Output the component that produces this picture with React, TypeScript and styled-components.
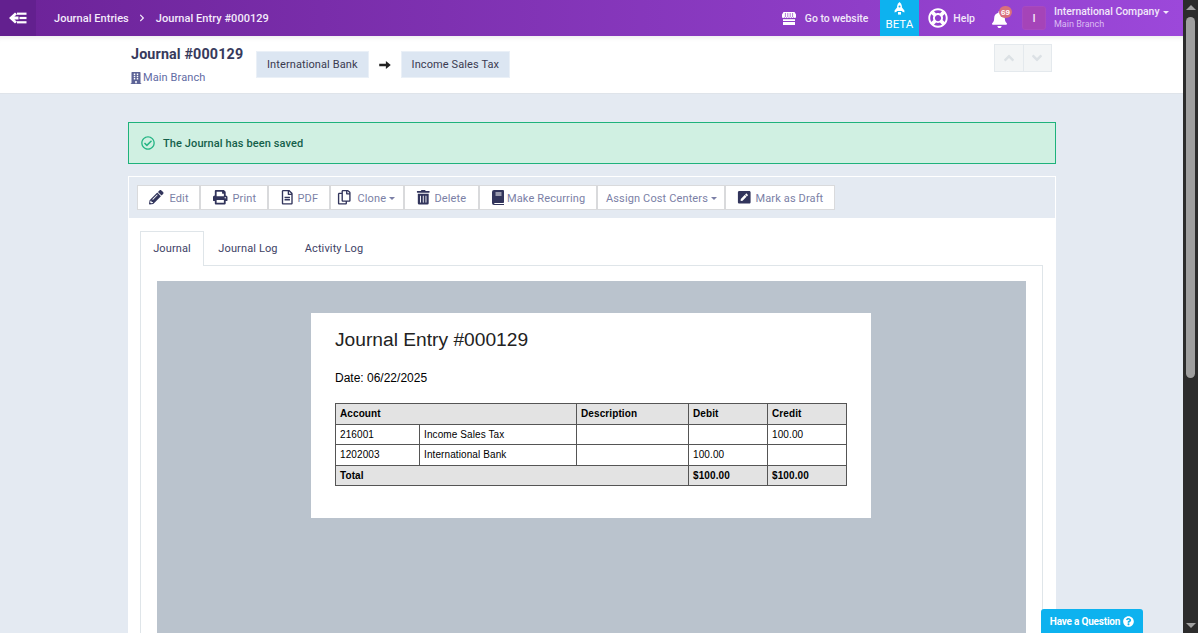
import React from "react";
import styled, { createGlobalStyle } from "styled-components";
import {
  FaPencilAlt, FaPrint, FaRegFileAlt, FaRegCopy, FaTrashAlt, FaPenSquare,
  FaRegLifeRing, FaBell, FaBuilding, FaRegCheckCircle,
  FaQuestionCircle, FaAngleUp, FaAngleDown, FaChevronRight,
} from "react-icons/fa";

const Global = createGlobalStyle`
  html, body { margin: 0; padding: 0; height: 633px; overflow: hidden; }
  body { font-family: Roboto, "Liberation Sans", sans-serif; }
  * { box-sizing: border-box; }
`;

const Shell = styled.div`display: flex; width: 1198px; height: 633px; overflow: hidden; background: #e4eaf2;`;
const Main = styled.div`width: 1183px; height: 633px; display: flex; flex-direction: column; overflow: hidden;`;

const ScrollTrack = styled.div`width: 15px; height: 633px; background: #2c2c2c; display: flex; flex-direction: column; align-items: center; flex: none;`;
const ScrollArrowUp = styled.div`width: 0; height: 0; margin-top: 5px; border-left: 5px solid transparent; border-right: 5px solid transparent; border-bottom: 5px solid #a0a0a0;`;
const ScrollThumb = styled.div`width: 9px; height: 361px; margin-top: 7px; background: #9f9f9f; border-radius: 5px;`;
const ScrollSpace = styled.div`flex: 1;`;
const ScrollArrowDown = styled.div`width: 0; height: 0; margin-bottom: 5px; border-left: 5px solid transparent; border-right: 5px solid transparent; border-top: 5px solid #a0a0a0;`;

const Topbar = styled.header`
  height: 36px; flex: none; display: flex; align-items: center; color: #fff;
  background: linear-gradient(90deg, #6c2398 0%, #9c48da 100%);
`;
const BackButton = styled.div`width: 36px; height: 36px; display: flex; align-items: center; justify-content: center; background: #63208f;`;
const Crumbs = styled.div`margin-left: 18px; display: flex; align-items: center; font-size: 11px; font-weight: 500; color: #f4ebfb; letter-spacing: .04px;`;
const CrumbSep = styled.span`display: flex; margin: 0 9.5px; font-size: 8px;`;
const TopRight = styled.div`margin-left: auto; display: flex; align-items: center; height: 36px;`;
const WebLink = styled.div`display: flex; align-items: center; font-size: 10.4px; font-weight: 500; color: #f2e8fa; margin-right: 12px;`;
const WebIcon = styled.span`display: flex; margin-right: 9px;`;
const Beta = styled.div`
  width: 39px; height: 36px; background: #0db2ef; display: flex; flex-direction: column; align-items: center;
  font-size: 11.5px; color: #fff; padding: 2px 1px 0 0; line-height: 13px;
  svg { margin-bottom: 3px; }
`;
const HelpLink = styled.div`display: flex; align-items: center; margin-left: 9px; font-size: 10.5px; font-weight: 500; color: #f2e8fa; svg { font-size: 20px; margin-right: 5px; color: #fff; }`;
const Bell = styled.div`position: relative; margin-left: 16px; width: 18px; height: 18px; display: flex; svg { font-size: 17px; margin-top: 2px; color: #fff; }`;
const BellBadge = styled.span`
  position: absolute; left: 8px; top: -3px; width: 13px; height: 12px; border-radius: 6px;
  background: #d9707c; color: #fff; font-size: 8px; font-weight: 700; display: flex; align-items: center; justify-content: center;
  font-family: "Liberation Sans", sans-serif;
`;
const Avatar = styled.div`
  width: 24px; height: 24px; margin-left: 13px; background: #a544b8; border-radius: 3px; color: #f4e6f7; border: 1px solid #a84ac0;
  display: flex; align-items: center; justify-content: center; font-size: 11px; font-weight: 500;
`;
const Company = styled.div`margin-left: 8px; width: 129px; display: flex; flex-direction: column; line-height: 12px;`;
const CompanyName = styled.div`font-size: 10.4px; font-weight: 500; color: #f2e8fa; display: flex; align-items: center;`;
const Caret = styled.span`
  display: inline-block; width: 0; height: 0; margin-left: ${(p: { $gap?: number }) => p.$gap ?? 4}px; border-left: 3px solid transparent;
  border-right: 3px solid transparent; border-top: 3px solid currentColor;
`;
const CompanySub = styled.div`font-size: 9px; color: #dcbcf3;`;

const SubHeader = styled.div`
  height: 58px; flex: none; background: #fff; border-bottom: 1px solid #dfe4ea; display: flex; padding-left: 131px;
  box-shadow: inset 0 6px 6px -6px rgba(0,0,0,.12);
`;
const TitleCol = styled.div`width: 125px; padding-top: 9px;`;
const Title = styled.div`font-size: 14.3px; font-weight: 700; color: #373a5c; line-height: 18px; letter-spacing: .15px; white-space: nowrap;`;
const Branch = styled.div`
  margin-top: 8px; font-size: 11px; color: #5f6ba4; display: flex; align-items: center; line-height: 13px;
  letter-spacing: .1px; svg { font-size: 12px; flex: none; margin: 0 1px 0 -1px; color: #5c6396; }
`;
const Flow = styled.div`display: flex; align-items: center; margin-top: 15px; height: 27px;`;
const FlowTag = styled.div`
  height: 27px; padding: 0 10px; display: flex; align-items: center; background: #dce6f2; border: 1px solid #eaf0f7;
  font-size: 11px; color: #3a3a50; letter-spacing: .1px;
`;
const FlowArrow = styled.span`display: flex; width: 32px; justify-content: center; color: #222;`;
const Pager = styled.div`margin: 8px 131px 0 auto; display: flex; height: 28px;`;
const PageBtn = styled.div`
  width: 29.5px; height: 28px; background: #f3f5f6; border: 1px solid #e4e9ed; display: flex; align-items: center; justify-content: center;
  color: #dce1e5; font-size: 16px; & + & { margin-left: -1px; }
`;

const Content = styled.div`flex: 1; padding: 28px 127px 0 128px; display: flex; flex-direction: column; min-height: 0;`;
const Alert = styled.div`
  height: 42px; flex: none; background: #d0f0e2; border: 1px solid #1eb27b; display: flex; align-items: center; padding-left: 12px;
  font-size: 11px; font-weight: 500; color: #14604a; letter-spacing: .1px; svg { font-size: 14px; color: #25b585; margin-right: 8px; }
`;
const Toolbar = styled.div`
  margin-top: 12px; height: 42px; flex: none; border-top: 1px solid #fff; border-left: 1px solid #fff; border-right: 1px solid #fff;
  background: #e4eaf2; display: flex; align-items: flex-start; padding: 8px 0 0 8px;
`;
const ToolBtn = styled.div<{ $w: number; $pad: number; $gap: number }>`
  height: 25px; width: ${(p) => p.$w}px; flex: none; background: #fff; border: 1px solid #d9dadc;
  display: flex; align-items: center; padding: 1px 0 0 ${(p) => p.$pad}px; font-size: 11px; color: #7b7fa6; letter-spacing: .13px; white-space: nowrap;
  svg { font-size: 14.5px; color: #32355c; margin: -1px ${(p) => p.$gap}px 0 0; flex: none; }
`;
const Panel = styled.div`flex: 1; background: #fff; padding: 13px 13px 0 12px; min-height: 0; display: flex; flex-direction: column; overflow: hidden;`;
const Tabs = styled.div`height: 35px; flex: none; display: flex; border-bottom: 1px solid #dfe5e9;`;
const Tab = styled.div<{ $active?: boolean; $w: number }>`
  height: ${(p) => (p.$active ? 35 : 34)}px; width: ${(p) => p.$w}px; flex: none; display: flex; align-items: center; justify-content: center;
  padding-bottom: ${(p) => (p.$active ? 2 : 0)}px;
  font-size: 11px; color: #3e4266; letter-spacing: .12px; background: #fff;
  ${(p) => p.$active && "border: 1px solid #dfe5e9; border-bottom: none;"}
`;
const TabBody = styled.div`flex: 1; min-height: 0; border-left: 1px solid #dfe5e9; border-right: 1px solid #dfe5e9; padding: 15px 16px 0 16px; display: flex;`;
const Viewer = styled.div`flex: 1; background: #bac3cd; display: flex; justify-content: center; padding: 32px 1px 0 0;`;
const Paper = styled.div`
  width: 560px; height: 205px; background: #fff; padding: 14px 24px 0 24px; color: #000; font-family: "Liberation Sans", Arial, sans-serif;
`;
const PaperTitle = styled.div`font-size: 19.2px; line-height: 25px; color: #222;`;
const PaperDate = styled.div`font-size: 12px; line-height: 14px; margin-top: 19px;`;
const Table = styled.table`
  margin-top: 18px; width: 511px; border-collapse: collapse; table-layout: fixed; font-size: 10px; letter-spacing: .1px;
  th, td { border: 1px solid #555; padding: 0 4px; height: 20.6px; text-align: left; font-weight: 400; white-space: nowrap; }
  th { background: #e3e3e3; font-weight: 700; }
`;

const Question = styled.div`
  position: absolute; left: 1041px; top: 609px; width: 102px; height: 24px; background: #0db2ef; border-radius: 3px 3px 0 0;
  color: #fff; font-size: 10px; font-weight: 700; display: flex; align-items: center; justify-content: center; letter-spacing: -.2px;
  svg { font-size: 11px; margin-left: 3px; }
`;

const BackIcon = () => (
  <svg width="18" height="12" viewBox="0 0 18 12" fill="#fff">
    <path d="M0 6 6 .5 8 2.2 5.4 4.6H9.5V7.4H5.4L8 9.8 6 11.5Z" />
    <rect x="8" y="0.6" width="9.5" height="2.2" />
    <rect x="10.5" y="4.9" width="7" height="2.2" />
    <rect x="8" y="9.2" width="9.5" height="2.2" />
  </svg>
);

const StoreIcon = () => (
  <svg width="14" height="13" viewBox="0 0 14 13" fill="#fff">
    <path d="M1.5 0h11L14 2.5V5a1.2 1.2 0 0 1-2.3.3 1.4 1.4 0 0 1-2.4 0 1.4 1.4 0 0 1-2.3 0 1.4 1.4 0 0 1-2.3 0 1.4 1.4 0 0 1-2.4 0A1.2 1.2 0 0 1 0 5V2.5Z" />
    <path d="M3.4 1v4M5.8 1v4M8.2 1v4M10.6 1v4" stroke="#8f3fc9" strokeWidth=".7" />
    <path d="M1 7.2h12V13H1Z" />
    <rect x="1" y="9" width="12" height="1" fill="#8f3fc9" />
  </svg>
);

const RocketIcon = () => (
  <svg width="11" height="13" viewBox="0 0 11 13" fill="#fff">
    <path d="M5.5 0C7.3 1.4 8 3.4 8 5.4V9H3V5.4C3 3.4 3.7 1.4 5.5 0Z" />
    <path d="M3 5.5 .6 8.4V10.6L3 9.6ZM8 5.5l2.4 2.9v2.2L8 9.6Z" />
    <rect x="4" y="10" width="3" height="2.6" />
    <circle cx="5.5" cy="4.6" r="1" fill="#0db2ef" />
  </svg>
);

const ThickArrow = () => (
  <svg width="12" height="8" viewBox="0 0 13 9" fill="currentColor">
    <path d="M0 3h7.5V0L13 4.5 7.5 9V6H0Z" />
  </svg>
);

const BookIcon = () => (
  <svg width="12" height="15" viewBox="0 0 12 15" fill="currentColor">
    <path d="M2 0h9a1 1 0 0 1 1 1v11.2a.8.8 0 0 1-.8.8H2.4a.9.9 0 0 0 0 1H12v1H2a2 2 0 0 1-2-2V2a2 2 0 0 1 2-2Z" />
    <path d="M3.5 3h6M3.5 5h6" stroke="#fff" strokeWidth="1" />
  </svg>
);

const tools: { icon: React.ReactNode; label: string; w: number; pad: number; gap: number; caret?: boolean }[] = [
  { icon: <FaPencilAlt />, label: "Edit", w: 63, pad: 11, gap: 6 },
  { icon: <FaPrint />, label: "Print", w: 68, pad: 12, gap: 5 },
  { icon: <FaRegFileAlt />, label: "PDF", w: 62, pad: 11, gap: 3 },
  { icon: <FaRegCopy />, label: "Clone", w: 74, pad: 6, gap: 6, caret: true },
  { icon: <FaTrashAlt />, label: "Delete", w: 75, pad: 11, gap: 4 },
  { icon: <BookIcon />, label: "Make Recurring", w: 118, pad: 12, gap: 3 },
  { icon: null, label: "Assign Cost Centers", w: 128, pad: 8, gap: 0, caret: true },
  { icon: <FaPenSquare />, label: "Mark as Draft", w: 110, pad: 11, gap: 4 },
];

export default function App() {
  return (
    <Shell>
      <Global />
      <Main>
        <Topbar>
          <BackButton><BackIcon /></BackButton>
          <Crumbs>
            Journal Entries
            <CrumbSep><FaChevronRight /></CrumbSep>
            Journal Entry #000129
          </Crumbs>
          <TopRight>
            <WebLink><WebIcon><StoreIcon /></WebIcon>Go to website</WebLink>
            <Beta><RocketIcon />BETA</Beta>
            <HelpLink><FaRegLifeRing />Help</HelpLink>
            <Bell><FaBell /><BellBadge>69</BellBadge></Bell>
            <Avatar>I</Avatar>
            <Company>
              <CompanyName>International Company<Caret /></CompanyName>
              <CompanySub>Main Branch</CompanySub>
            </Company>
          </TopRight>
        </Topbar>
        <SubHeader>
          <TitleCol>
            <Title>Journal #000129</Title>
            <Branch><FaBuilding />Main Branch</Branch>
          </TitleCol>
          <Flow>
            <FlowTag>International Bank</FlowTag>
            <FlowArrow><ThickArrow /></FlowArrow>
            <FlowTag>Income Sales Tax</FlowTag>
          </Flow>
          <Pager>
            <PageBtn><FaAngleUp /></PageBtn>
            <PageBtn><FaAngleDown /></PageBtn>
          </Pager>
        </SubHeader>
        <Content>
          <Alert><FaRegCheckCircle />The Journal has been saved</Alert>
          <Toolbar>
            {tools.map((t) => (
              <ToolBtn key={t.label} $w={t.w} $pad={t.pad} $gap={t.gap}>
                {t.icon}{t.label}{t.caret && <Caret $gap={3} />}
              </ToolBtn>
            ))}
          </Toolbar>
          <Panel>
            <Tabs>
              <Tab $active $w={64}>Journal</Tab>
              <Tab $w={88}>Journal Log</Tab>
              <Tab $w={84}>Activity Log</Tab>
            </Tabs>
            <TabBody>
              <Viewer>
                <Paper>
                  <PaperTitle>Journal Entry #000129</PaperTitle>
                  <PaperDate>Date: 06/22/2025</PaperDate>
                  <Table>
                    <colgroup>
                      <col style={{ width: 84 }} />
                      <col style={{ width: 157 }} />
                      <col style={{ width: 112 }} />
                      <col style={{ width: 79 }} />
                      <col style={{ width: 79 }} />
                    </colgroup>
                    <thead>
                      <tr><th colSpan={2}>Account</th><th>Description</th><th>Debit</th><th>Credit</th></tr>
                    </thead>
                    <tbody>
                      <tr><td>216001</td><td>Income Sales Tax</td><td></td><td></td><td>100.00</td></tr>
                      <tr><td>1202003</td><td>International Bank</td><td></td><td>100.00</td><td></td></tr>
                      <tr><th colSpan={3}>Total</th><th>$100.00</th><th>$100.00</th></tr>
                    </tbody>
                  </Table>
                </Paper>
              </Viewer>
            </TabBody>
          </Panel>
        </Content>
      </Main>
      <ScrollTrack>
        <ScrollArrowUp />
        <ScrollThumb />
        <ScrollSpace />
        <ScrollArrowDown />
      </ScrollTrack>
      <Question>Have a Question<FaQuestionCircle /></Question>
    </Shell>
  );
}
